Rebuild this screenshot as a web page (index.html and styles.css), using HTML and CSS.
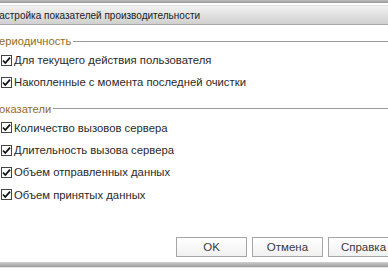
FILE: index.html
```html
<!DOCTYPE html>
<html lang="ru">
<head>
    <meta charset="UTF-8">
    <title>Настройка показателей производительности</title>
    <link rel="stylesheet" href="styles.css">
</head>
<body>

    <div class="dialog">
        <!-- Window frame and title -->
        <div class="frame-top"></div>
        <div class="titlebar">Настройка показателей производительности</div>

        <div class="content">
            <!-- Periodicity group -->
            <div class="group">
                <div class="group-title"><span>Периодичность</span></div>
                <label class="check"><svg class="box" width="11" height="11" viewBox="0 0 11 11"><rect x="0.5" y="0.5" width="10" height="10" fill="#fff" stroke="#444"/><path d="M2 5.5 L4.3 8 L9 2.6" fill="none" stroke="#111" stroke-width="1.8"/></svg>Для текущего действия пользователя</label>
                <label class="check"><svg class="box" width="11" height="11" viewBox="0 0 11 11"><rect x="0.5" y="0.5" width="10" height="10" fill="#fff" stroke="#444"/><path d="M2 5.5 L4.3 8 L9 2.6" fill="none" stroke="#111" stroke-width="1.8"/></svg>Накопленные с момента последней очистки</label>
            </div>

            <!-- Indicators group -->
            <div class="group">
                <div class="group-title"><span>Показатели</span></div>
                <label class="check"><svg class="box" width="11" height="11" viewBox="0 0 11 11"><rect x="0.5" y="0.5" width="10" height="10" fill="#fff" stroke="#444"/><path d="M2 5.5 L4.3 8 L9 2.6" fill="none" stroke="#111" stroke-width="1.8"/></svg>Количество вызовов сервера</label>
                <label class="check"><svg class="box" width="11" height="11" viewBox="0 0 11 11"><rect x="0.5" y="0.5" width="10" height="10" fill="#fff" stroke="#444"/><path d="M2 5.5 L4.3 8 L9 2.6" fill="none" stroke="#111" stroke-width="1.8"/></svg>Длительность вызова сервера</label>
                <label class="check"><svg class="box" width="11" height="11" viewBox="0 0 11 11"><rect x="0.5" y="0.5" width="10" height="10" fill="#fff" stroke="#444"/><path d="M2 5.5 L4.3 8 L9 2.6" fill="none" stroke="#111" stroke-width="1.8"/></svg>Объем отправленных данных</label>
                <label class="check"><svg class="box" width="11" height="11" viewBox="0 0 11 11"><rect x="0.5" y="0.5" width="10" height="10" fill="#fff" stroke="#444"/><path d="M2 5.5 L4.3 8 L9 2.6" fill="none" stroke="#111" stroke-width="1.8"/></svg>Объем принятых данных</label>
            </div>
        </div>

        <!-- Buttons -->
        <div class="buttons">
            <button>OK</button>
            <button>Отмена</button>
            <button>Справка</button>
        </div>

        <div class="frame-bottom"></div>
    </div>

</body>
</html>
```

FILE: styles.css
```css
body {
    margin: 0;
    width: 388px;
    height: 272px;
    overflow: hidden;
    background-color: #fff;
    font-family: "Liberation Sans", Arial, sans-serif;
    color: #333;
}

.dialog {
    margin-left: -9px;
    width: 410px;
}

.frame-top {
    height: 3px;
    background: linear-gradient(#bdbdbd, #9a9a9a);
    border-bottom: 2px solid #fff;
}

.titlebar {
    height: 18px;
    line-height: 19px;
    padding-left: 1px;
    font-size: 10px;
    color: #222;
    background: linear-gradient(#f2f2f2, #d0d0d0);
    border-top: 1px solid #e0e0e0;
    border-bottom: 1px solid #a8a8a8;
}

.content {
    height: 212px;
}

.group {
    padding-top: 8px;
}

.group + .group {
    padding-top: 7px;
}

.group-title {
    display: flex;
    align-items: center;
    height: 16px;
    font-size: 11.2px;
    color: #946c1e;
}

.group-title::after {
    content: "";
    flex: 1;
    height: 1px;
    margin-left: 2px;
    background-color: #9a9a9a;
}

.check {
    display: flex;
    align-items: center;
    height: 22.3px;
    padding-left: 9px;
    font-size: 11.3px;
    color: #2a2a2a;
}

.check .box {
    margin: 0 2px 0 1px;
}

.buttons {
    display: flex;
    gap: 5px;
    padding-left: 185px;
    height: 24px;
}

.buttons button {
    width: 71px;
    height: 20px;
    padding: 0;
    font-family: inherit;
    font-size: 11.5px;
    color: #3a3a3a;
    background: linear-gradient(#ffffff, #f1f1f1);
    border: 1px solid #a6a6a6;
    border-radius: 0;
}

.frame-bottom {
    height: 5px;
    margin-top: 1px;
    background: linear-gradient(#d0d0d0, #9c9c9c);
    border-bottom: 1px solid #e6e6e6;
}
```
